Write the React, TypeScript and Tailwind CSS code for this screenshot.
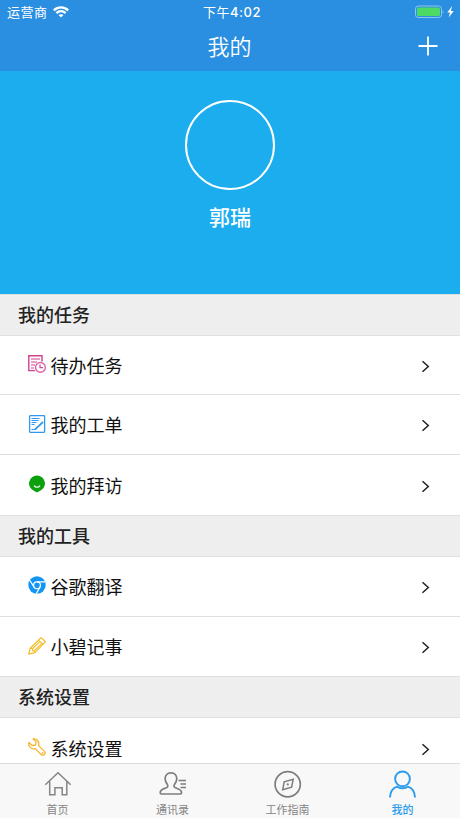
import type { ReactNode } from "react";

const TodoIcon = () => (
  <svg width="18" height="18" viewBox="0 0 18 18" fill="none" stroke="#d2408e" strokeWidth="1.4">
    <path d="M14 6.5V.8H.8V15.6H7" />
    <path d="M3 4h9M3 7h6M3 10h4M3 13h3" strokeWidth="1.2" />
    <circle cx="12.4" cy="12.4" r="4.9" stroke="#de62a4" />
    <path d="M12 9.5v3.2h3" strokeWidth="1.2" />
  </svg>
);

const OrderIcon = () => (
  <svg width="18" height="18" viewBox="0 0 18 18" fill="none" stroke="#2f97ee">
    <rect x="1.6" y=".7" width="15" height="16.6" rx=".8" strokeWidth="1.3" />
    <path d="M3.5 3.5h8M3.5 5.5h7M3.5 7.5h5M3.5 9.5h3" strokeWidth="1.1" />
    <path d="M15 7l-6.3 5.8M8.7 12.8L7 14.6" strokeWidth="1.7" />
    <path d="M3.5 14.5h4" strokeWidth="1" />
  </svg>
);

const VisitIcon = () => (
  <svg width="18" height="18" viewBox="0 0 18 18">
    <path d="M9 .4a8 8 0 0 0-3.2 15.3L9 17.6l3.200-1.900A8 8 0 0 0 9 .4z" fill="#0ca10c" />
    <path d="M6 10.600c1.600 2.200 4.400 2.200 6 0" fill="none" stroke="#fff" strokeWidth="1.2" />
  </svg>
);

const ChromeIcon = () => (
  <svg width="18" height="18" viewBox="0 0 18 18">
    <circle cx="9" cy="9" r="8.7" fill="#1296f5" />
    <g fill="none" stroke="#fff" strokeWidth="1.2">
      <circle cx="9" cy="9.2" r="3.4" />
      <path d="M9 5.8h8.3M6 10.9L1.5 4M12 10.9L8.2 18" />
    </g>
  </svg>
);

const PencilIcon = () => (
  <svg width="18" height="18" viewBox="0 0 18 18" fill="none" stroke="#f4bd27" strokeWidth="1.3" strokeLinejoin="round">
    <path d="M.8 17.200l1.400-6L12.300 1.400q.8-.8 1.700 0L16.700 4q.8.800 0 1.600L6.800 15.600z" />
    <path d="M10.600 3.100l4.400 4.400M2.200 11.200l2.200.5.3 1.900 1.800.3.300 1.700M4.700 11.500l7.200-6.800M6.500 13.500l7.200-6.900" strokeWidth="1.1" />
  </svg>
);

const WrenchIcon = () => (
  <svg width="18" height="18" viewBox="0 0 18 18" fill="none" stroke="#f6b52c" strokeWidth="1.3" strokeLinejoin="round">
    <path d="M5 .9l3.200 3L7.500 7 4.300 7.600.9 4.500C0 8.300 3.200 11.600 7.200 10.600l6 6c2.400 1.700 5-1 3.300-3.200l-6-5.800C11.800 3.600 8.800.2 5 .9z" />
    <circle cx="14.6" cy="15" r=".3" />
  </svg>
);

const HomeIcon = () => (
  <svg width="28" height="28" viewBox="0 0 28 28" fill="none" stroke="#858585" strokeWidth="1.5">
    <path d="M1.300 14.700L14 2.700l12.700 12M5.700 11.500v13.200h5.200v-7h7.300v7h4.600V11.500" />
  </svg>
);

const ContactsIcon = () => (
  <svg width="28" height="28" viewBox="0 0 28 28" fill="none" stroke="#7d7d7d" strokeWidth="1.7" strokeLinejoin="round">
    <path d="M12 2.800c-3.700 0-5.900 2.600-5.900 6 0 2.600 1.200 4.300 2.300 5.800.8 1.500.4 2.500-1.100 3.200-2.900 1.200-6.100 1.600-6.100 4.800 0 1.100.3 1.400 1.300 1.400h18.700c1 0 1.400-.3 1.400-1.400 0-3.200-3.300-3.600-6.100-4.800-1.500-.7-1.900-1.700-1.100-3.200 1.100-1.500 2.400-3.200 2.400-5.800 0-3.400-2.200-6-5.800-6z" />
    <path d="M19.500 10.500H27M21.500 14H27M21.500 17.500H27" />
  </svg>
);

const CompassIcon = () => (
  <svg width="28" height="28" viewBox="0 0 28 28" fill="none" stroke="#7d7d7d" strokeWidth="1.7">
    <circle cx="13.7" cy="14.3" r="12.6" />
    <path d="M8.700 19.700l1.500-7.800 9-2.600-1.600 7.900z" strokeWidth="1.5" />
    <circle cx="13.8" cy="14.4" r="1.1" fill="#7d7d7d" stroke="none" />
  </svg>
);

const UserIcon = () => (
  <svg width="28" height="28" viewBox="0 0 28 28" fill="none" stroke="#2b9cec" strokeWidth="1.9">
    <circle cx="13.5" cy="8.9" r="7.4" />
    <path d="M1 27.500c.3-5.300 2.800-9.500 7.200-10.800 2.500 2 8.100 2 10.600 0 4.400 1.300 6.900 5.500 7.200 10.800" />
  </svg>
);

const sections: { title: string; items: { label: string; icon: ReactNode }[] }[] = [
  {
    title: "我的任务",
    items: [
      { label: "待办任务", icon: <TodoIcon /> },
      { label: "我的工单", icon: <OrderIcon /> },
      { label: "我的拜访", icon: <VisitIcon /> },
    ],
  },
  {
    title: "我的工具",
    items: [
      { label: "谷歌翻译", icon: <ChromeIcon /> },
      { label: "小碧记事", icon: <PencilIcon /> },
    ],
  },
  {
    title: "系统设置",
    items: [{ label: "系统设置", icon: <WrenchIcon /> }],
  },
];

const tabs = [
  { label: "首页", icon: <HomeIcon /> },
  { label: "通讯录", icon: <ContactsIcon /> },
  { label: "工作指南", icon: <CompassIcon /> },
  { label: "我的", icon: <UserIcon />, active: true },
];

const StatusBar = () => (
  <div className="grid h-6 grid-cols-3 items-center pl-[7px] pr-[3px] text-[13px] leading-6">
    <div className="flex items-center gap-[5px]">
      <span className="tracking-[0.5px]">运营商</span>
      <svg width="16" height="12" viewBox="0 0 16 12" fill="none" stroke="#fff" strokeWidth="2.3">
        <path d="M.8 4.400c4.100-4 10.300-4 14.400 0M3.400 7.100c2.600-2.600 6.600-2.600 9.200 0" />
        <path d="M8 11.600L5.500 9.100c1.400-1.300 3.600-1.300 5 0z" fill="#fff" stroke="none" />
      </svg>
    </div>
    <div className="whitespace-nowrap text-center tracking-[0.5px]">
      下午<span className="font-medium">4:02</span>
    </div>
    <div className="flex items-center justify-end">
      <svg width="42" height="14" viewBox="0 0 42 14">
        <rect x=".5" y="1" width="26" height="11.5" rx="2.8" fill="none" stroke="#8fc6ef" />
        <rect x="2" y="2.5" width="23" height="8.5" rx="1.5" fill="#4cd964" />
        <path d="M27.700 4.700q1.600 2 0 4z" fill="#8fc6ef" />
        <path d="M37.200 1l-5 6.500h2.800l-1.300 5 5-6.500h-2.900z" fill="#fff" />
      </svg>
    </div>
  </div>
);

const App = () => {
  return (
    <div className="flex h-[818px] w-full flex-col overflow-hidden bg-white font-['Inter','Noto_Sans_CJK_SC',sans-serif]">
      <header className="h-[71px] shrink-0 bg-[#2a8fe0] text-white">
        <StatusBar />
        <div className="grid h-[45px] grid-cols-3 items-center pr-[22px]">
          <span />
          <h1 className="pl-[21px] text-center text-[22px] font-[350] leading-[44px]">我的</h1>
          <svg className="mb-px justify-self-end" width="20" height="20" viewBox="0 0 20 20" stroke="#fff" strokeWidth="1.8">
            <path d="M10 .5v19M.5 10h19" />
          </svg>
        </div>
      </header>

      <div className="flex h-[223px] shrink-0 flex-col items-center bg-[#1badee] pt-[29px] text-white">
        <div className="size-[90px] rounded-full border-[2.5px] border-white" />
        <p className="mt-3 text-[21px] font-medium leading-8">郭瑞</p>
      </div>

      <main className="min-h-0 flex-1 overflow-hidden">
        {sections.map((section) => (
          <section key={section.title}>
            <h2 className="flex h-[41.7px] items-center border-y border-[#e0e0e0] bg-[#eeeeee] pl-[18px] pt-[1.5px] text-[18px] font-medium text-[#222]">
              {section.title}
            </h2>
            <ul>
              {section.items.map((item) => (
                <li
                  key={item.label}
                  className="flex h-[59.8px] items-center border-b border-[#dfdfdf] pl-7 pr-[30.5px] pt-[2.2px] text-[18px] text-[#111] last:border-b-0"
                >
                  <span className="mb-1">{item.icon}</span>
                  <span className="ml-[4.5px] flex-1">{item.label}</span>
                  <svg width="9" height="13" viewBox="0 0 9 13" fill="none" stroke="#222" strokeWidth="1.5">
                    <path d="M1.500 1.200l5.800 5.300-5.800 5.300" />
                  </svg>
                </li>
              ))}
            </ul>
          </section>
        ))}
      </main>

      <nav className="grid h-[55px] shrink-0 grid-cols-4 border-t border-[#dcdcdc] bg-[#f8f8f8]">
        {tabs.map((tab) => (
          <div
            key={tab.label}
            className={`flex flex-col items-center pt-1.5 text-[11px] ${
              tab.active ? "font-medium text-[#2b9cec]" : "text-[#858585]"
            }`}
          >
            {tab.icon}
            <span className="mt-1 leading-4">{tab.label}</span>
          </div>
        ))}
      </nav>
    </div>
  );
};

export default App;
